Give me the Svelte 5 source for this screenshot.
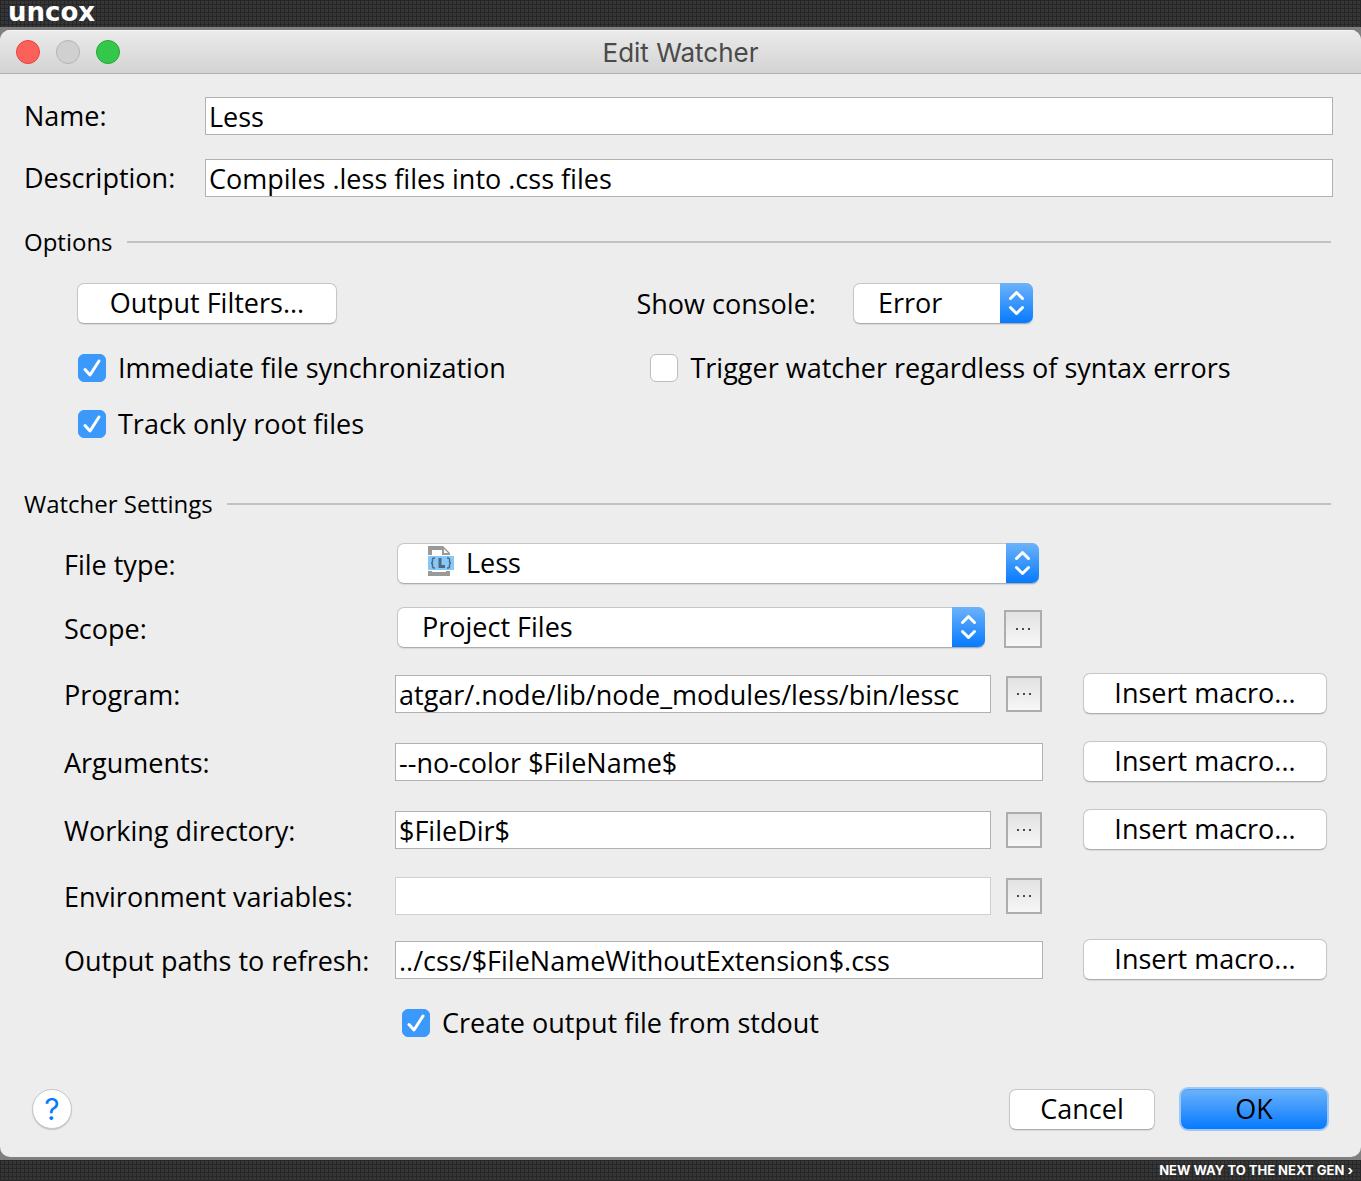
<script lang="ts">
  let name = $state('Less');
  let description = $state('Compiles .less files into .css files');
  let program = $state('atgar/.node/lib/node_modules/less/bin/lessc');
  let args = $state('--no-color $FileName$');
  let directory = $state('$FileDir$');
  let variables = $state('');
  let output = $state('../css/$FileNameWithoutExtension$.css');

  let immediate = $state(true);
  let trackRoot = $state(true);
  let trigger = $state(false);
  let stdout = $state(true);
</script>

{#snippet arrows()}
  <svg class="arrows" viewBox="0 0 33 40" aria-hidden="true">
    <path d="M10.500 15.500 L16.500 9.500 L22.500 15.500 M10.500 24.500 L16.500 30.500 L22.500 24.500" />
  </svg>
{/snippet}

{#snippet browse(label: string)}
  <button class="browse" type="button" aria-label={label}>
    <svg viewBox="0 0 14 2" aria-hidden="true">
      <path d="M0 0h2v2H0zM6 0h2v2H6zM12 0h2v2h-2z" />
    </svg>
  </button>
{/snippet}

<div class="page">
  <header class="banner"><span class="brand">uncox</span></header>

  <main class="window">
    <div class="titlebar">
      <div class="lights">
        <button class="light close" type="button" aria-label="Close"></button>
        <button class="light minimize" type="button" aria-label="Minimize"></button>
        <button class="light zoom" type="button" aria-label="Zoom"></button>
      </div>
      <h1>Edit Watcher</h1>
    </div>

    <form class="content">
      <div class="head">
        <label for="name">Name:</label>
        <input id="name" type="text" bind:value={name} />
        <label for="description">Description:</label>
        <input id="description" type="text" bind:value={description} />
      </div>

      <section>
        <h2>Options</h2>
        <div class="options">
          <div>
            <button class="btn filters" type="button">Output Filters...</button>
          </div>
          <div class="console">
            <label for="console">Show console:</label>
            <div class="select">
              <select id="console">
                <option>Error</option>
                <option>Always</option>
                <option>Never</option>
              </select>
              {@render arrows()}
            </div>
          </div>
          <label class="check">
            <input type="checkbox" bind:checked={immediate} />
            <span>Immediate file synchronization</span>
          </label>
          <label class="check">
            <input type="checkbox" bind:checked={trigger} />
            <span>Trigger watcher regardless of syntax errors</span>
          </label>
          <label class="check">
            <input type="checkbox" bind:checked={trackRoot} />
            <span>Track only root files</span>
          </label>
        </div>
      </section>

      <section>
        <h2>Watcher Settings</h2>
        <div class="settings">
          <div class="row">
            <label for="type">File type:</label>
            <div class="field combo wide">
              <div class="select">
                <select id="type" class="with-icon">
                  <option>Less</option>
                </select>
                <svg class="file" viewBox="0 0 26 30" aria-hidden="true">
                  <path fill="#999" d="M0 0h15l7 7v2H0z" />
                  <path fill="#fff" d="M4 4h10v5H4z" />
                  <path fill="#fff" d="M16 3l4 4h-4z" />
                  <path fill="#999" d="M0 25h4v1h14v-1h4v5H0z" />
                  <path fill="#85c9fb" d="M0 10h26v14H0z" />
                  <path
                    class="brace"
                    d="M7 12H6q-1.500 0-1.500 1.500V15q0 2-1.500 2 1.500 0 1.500 2v1.500Q4.500 22 6 22h1M19 12h1q1.500 0 1.500 1.500V15q0 2 1.500 2-1.500 0-1.500 2v1.500q0 1.500-1.500 1.500h-1"
                  />
                  <path class="mark" d="M12 12v8.500H17" />
                </svg>
                {@render arrows()}
              </div>
            </div>
          </div>

          <div class="row mid">
            <label for="scope">Scope:</label>
            <div class="field combo">
              <div class="select">
                <select id="scope">
                  <option>Project Files</option>
                </select>
                {@render arrows()}
              </div>
              {@render browse('Choose scope')}
            </div>
          </div>

          <div class="row tall">
            <label for="program">Program:</label>
            <div class="field">
              <input id="program" type="text" bind:value={program} />
              {@render browse('Choose program')}
            </div>
            <button class="btn" type="button">Insert macro...</button>
          </div>

          <div class="row tall">
            <label for="args">Arguments:</label>
            <div class="field">
              <input id="args" type="text" bind:value={args} />
            </div>
            <button class="btn" type="button">Insert macro...</button>
          </div>

          <div class="row mid">
            <label for="directory">Working directory:</label>
            <div class="field">
              <input id="directory" type="text" bind:value={directory} />
              {@render browse('Choose working directory')}
            </div>
            <button class="btn" type="button">Insert macro...</button>
          </div>

          <div class="row">
            <label for="variables">Environment variables:</label>
            <div class="field">
              <input id="variables" class="pale" type="text" bind:value={variables} />
              {@render browse('Edit environment variables')}
            </div>
          </div>

          <div class="row">
            <label for="output">Output paths to refresh:</label>
            <div class="field">
              <input id="output" type="text" bind:value={output} />
            </div>
            <button class="btn" type="button">Insert macro...</button>
          </div>

          <div class="row last">
            <label class="check stdout">
              <input type="checkbox" bind:checked={stdout} />
              <span>Create output file from stdout</span>
            </label>
          </div>
        </div>
      </section>

      <div class="actions">
        <button class="help" type="button" aria-label="Help">?</button>
        <button class="btn cancel" type="button">Cancel</button>
        <button class="btn ok" type="submit">OK</button>
      </div>
    </form>
  </main>

  <footer class="banner bottom">NEW WAY TO THE NEXT GEN &rsaquo;</footer>
</div>

<style>
  :global(body) {
    margin: 0;
    background: #7f7f7f;
  }

  .page,
  button,
  input,
  select {
    font-family: 'Open Sans', 'Noto Sans', sans-serif;
    font-size: 27px;
    color: #000;
  }

  button,
  input,
  select {
    box-sizing: border-box;
    margin: 0;
  }

  .page {
    line-height: 36px;
  }

  /* dark strips above and below the window */
  .banner {
    display: flex;
    height: 27px;
    padding: 0 8px;
    color: #fff;
    background-color: #363636;
    background-image:
      linear-gradient(#272727 1px, transparent 1px),
      linear-gradient(90deg, #272727 1px, transparent 1px);
    background-size: 4px 4px;
    font-weight: bold;
  }

  .brand {
    font-family: 'DejaVu Sans', sans-serif;
    font-size: 26px;
    line-height: 25px;
  }

  .bottom {
    justify-content: flex-end;
    height: 22px;
    font-family: Inter, sans-serif;
    font-size: 13px;
    line-height: 21px;
  }

  .window {
    margin: 3px 0;
    overflow: hidden;
    border-radius: 10px;
    background: #ededed;
  }

  .titlebar {
    display: grid;
    grid-template-columns: 1fr auto 1fr;
    align-items: center;
    box-sizing: border-box;
    height: 44px;
    border-bottom: 1px solid #b1b1b1;
    background: linear-gradient(#ebebeb, #d3d3d3);
    box-shadow: inset 0 1px #f6f6f6;
  }

  .lights {
    display: flex;
    gap: 16px;
    padding-left: 16px;
  }

  .light {
    width: 24px;
    height: 24px;
    padding: 0;
    border: 1px solid #e2443f;
    border-radius: 50%;
    background: #fc605b;
  }

  .minimize {
    border-color: #b4b4b4;
    background: #d0d0d0;
  }

  .zoom {
    border-color: #23a735;
    background: #34c84a;
  }

  h1 {
    margin: 0;
    padding-top: 2px;
    color: #4a4a4a;
    font-family: Inter, sans-serif;
    font-size: 26px;
    font-weight: 400;
  }

  .content {
    padding: 23px 28px 26px 24px;
  }

  .head {
    display: grid;
    grid-template-columns: 181px 1fr;
    align-items: center;
    row-gap: 24px;
  }

  input[type='text'] {
    width: 100%;
    min-width: 0;
    height: 38px;
    padding: 0 3px;
    border: 1px solid #b1b1b1;
    border-radius: 0;
    background: #fff;
  }

  input.pale {
    border-color: #cfcfcf;
  }

  h2 {
    display: flex;
    align-items: center;
    gap: 14px;
    margin: 0 2px 0 0;
    font-size: 24px;
    font-weight: 400;
  }

  h2::after {
    content: '';
    flex: 1;
    height: 2px;
    background: #c2c2c2;
  }

  section h2 {
    padding-top: 27px;
  }

  .options {
    display: grid;
    grid-template-columns: 572fr 683fr;
    grid-template-rows: 43px;
    align-items: start;
    row-gap: 28px;
    padding: 23px 0 21px 53px;
  }

  .options .check {
    padding-left: 1px;
  }

  .console {
    display: flex;
    align-items: center;
    gap: 37px;
    margin-left: -13px;
  }

  .console .select {
    width: 180px;
    flex: none;
  }

  .btn {
    height: 41px;
    padding: 0 0 2px;
    border: 1px solid #c6c6c6;
    border-bottom-color: #adadad;
    border-radius: 7px;
    background: #fff;
    box-shadow: 0 1px 1px #d9d9d9;
  }

  .options .filters {
    display: block;
    width: 260px;
  }

  .check {
    display: flex;
    align-items: center;
    gap: 12px;
    height: 28px;
    white-space: nowrap;
  }

  input[type='checkbox'] {
    appearance: none;
    flex: none;
    width: 28px;
    height: 28px;
    border: 1px solid #bdbdbd;
    border-radius: 6px;
    background: #fff;
  }

  input[type='checkbox']:checked {
    border-color: #3b99fc;
    background: #3b99fc
      url("data:image/svg+xml,%3Csvg xmlns='http://www.w3.org/2000/svg' viewBox='0 0 26 26'%3E%3Cpath d='M6 14.500l5 5.500 9-14' fill='none' stroke='white' stroke-width='3' stroke-linecap='round' stroke-linejoin='round'/%3E%3C/svg%3E");
  }

  .select {
    display: grid;
    height: 41px;
  }

  .select > * {
    grid-area: 1 / 1;
  }

  select {
    appearance: none;
    width: 100%;
    padding: 0 40px 2px 24px;
    border: 1px solid #c6c6c6;
    border-bottom-color: #adadad;
    border-radius: 7px;
    background: #fff;
    box-shadow: 0 1px 1px #d9d9d9;
  }

  select.with-icon {
    padding-left: 68px;
  }

  .arrows {
    justify-self: end;
    width: 33px;
    height: 40px;
    border-radius: 0 7px 7px 0;
    background: linear-gradient(#6cb3fa, #067aff);
    pointer-events: none;
  }

  .arrows path {
    fill: none;
    stroke: #fff;
    stroke-width: 3;
    stroke-linecap: round;
    stroke-linejoin: round;
  }

  .file {
    width: 26px;
    height: 30px;
    margin: 3px 0 0 31px;
    pointer-events: none;
  }

  .brace,
  .mark {
    fill: none;
    stroke: #51697a;
    stroke-width: 1.5;
  }

  .mark {
    stroke-width: 3;
  }

  .settings {
    padding: 21px 6px 0 40px;
  }

  .row {
    display: grid;
    grid-template-columns: 331px 1fr 244px;
    grid-template-rows: 40px;
    align-items: end;
    margin-bottom: 24px;
  }

  .row > .btn {
    align-self: start;
  }

  .field {
    display: flex;
    align-items: center;
    gap: 15px;
    margin-right: 40px;
  }

  .field .browse {
    margin-right: 1px;
  }

  .combo {
    gap: 19px;
    align-items: start;
    align-self: start;
    margin: 0 41px 0 2px;
  }

  .combo .select {
    flex: 1;
  }

  .wide {
    margin-right: 44px;
  }

  .mid {
    margin-bottom: 26px;
  }

  .tall {
    margin-bottom: 28px;
  }

  .browse {
    display: flex;
    align-items: center;
    justify-content: center;
    flex: none;
    width: 36px;
    height: 36px;
    padding: 0;
    border: 2px solid #adadad;
    background: linear-gradient(#e2e2e2, #f7f7f7);
  }

  .combo .browse {
    width: 38px;
    height: 38px;
    margin: 3px 0 0;
  }

  .browse svg {
    width: 14px;
    height: 2px;
    fill: #4a4a4a;
  }

  .last {
    align-items: center;
  }

  .stdout {
    grid-column: 2;
    margin-left: 7px;
  }

  .actions {
    display: flex;
    align-items: center;
    padding: 20px 4px 0 8px;
  }

  .help {
    width: 40px;
    height: 40px;
    margin-right: auto;
    padding: 0;
    border: 1px solid #c6c6c6;
    border-radius: 50%;
    background: #fff;
    box-shadow: 0 1px 1px #c6c6c6;
    color: #067aff;
    font-family: Inter, sans-serif;
    font-size: 30px;
  }

  .cancel {
    width: 146px;
    margin-right: 24px;
  }

  .ok {
    width: 150px;
    height: 44px;
    border: 2px solid #9fc8f3;
    border-radius: 9px;
    background: linear-gradient(#6cb3fa, #067aff);
    box-shadow: inset 0 1px #4a9df5;
  }
</style>
